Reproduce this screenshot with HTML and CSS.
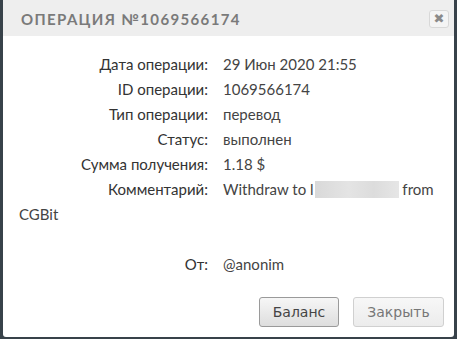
FILE: index.html
```html
<!DOCTYPE html>
<html lang="ru">

<head>
    <meta charset="utf-8">
    <title>Операция</title>
    <link rel="stylesheet" href="styles.css">
</head>

<body>
    <div class="modal">
        <div class="modal-head">
            <span class="modal-title">Операция №1069566174</span>
            <span class="close">&#x2716;</span>
        </div>

        <div class="modal-body">
            <div class="row"><span class="label">Дата операции:</span>29 Июн 2020 21:55</div>
            <div class="row"><span class="label">ID операции:</span>1069566174</div>
            <div class="row"><span class="label">Тип операции:</span>перевод</div>
            <div class="row"><span class="label">Статус:</span>выполнен</div>
            <div class="row"><span class="label">Сумма получения:</span>1.18 $</div>
            <div class="row"><span class="label">Комментарий:</span>Withdraw to l<span class="hidden"></span> from</div>
            <div class="row">CGBit</div>
            <div class="row from"><span class="label">От:</span>@anonim</div>
        </div>

        <div class="modal-foot">
            <button class="btn">Баланс</button>
            <button class="btn btn-light">Закрыть</button>
        </div>
    </div>
</body>

</html>
```

FILE: styles.css
```css
html, body {
    height: 100%;
}

body {
    margin: 0;
    padding: 0 3px 2px 3px;
    box-sizing: border-box;
    background-color: #38424a;
    display: flex;
    font-family: Lato, "Open Sans", sans-serif;
}

.modal {
    flex: 1;
    display: flex;
    flex-direction: column;
    background-color: #fff;
    border-radius: 0 0 3px 3px;
}

.modal-head {
    height: 36px;
    background-color: #eee;
    display: flex;
    align-items: center;
    justify-content: space-between;
    padding: 0 5px 0 18px;
}

.modal-title {
    text-transform: uppercase;
    font-weight: 700;
    font-size: 15px;
    letter-spacing: 1.35px;
    color: #7a7a7a;
    margin-top: 2px;
}

.close {
    width: 18px;
    height: 16px;
    border: 1px solid #d8d8d8;
    border-radius: 3px;
    background-color: #f4f4f4;
    color: #8a8a8a;
    font-family: "DejaVu Sans", sans-serif;
    font-size: 13px;
    font-weight: 700;
    line-height: 16px;
    text-align: center;
    margin-top: 2px;
}

.modal-body {
    flex: 1;
    padding: 16px 16px 0 16px;
    font-size: 15px;
    line-height: 25px;
    color: #444;
}

.label {
    display: inline-block;
    width: 189px;
    text-align: right;
    margin-right: 15px;
    color: #333;
}

.hidden {
    display: inline-block;
    width: 84px;
    height: 17px;
    margin-left: 1px;
    vertical-align: -3px;
    background: linear-gradient(90deg, #d9d9d9, #e4e4e4 40%, #dcdcdc 70%, #e6e6e6);
}

.from {
    margin-top: 25px;
}

.modal-foot {
    display: flex;
    justify-content: flex-end;
    gap: 14px;
    padding: 0 10px 10px 0;
}

.btn {
    width: 80px;
    height: 30px;
    padding: 0;
    font-family: "DejaVu Sans", sans-serif;
    font-size: 14px;
    font-weight: 400;
    color: #444;
    border: 1px solid #9a9a9a;
    border-radius: 3px;
    background: linear-gradient(#f6f6f6, #dedede);
}

.btn-light {
    width: 91px;
    color: #777;
    border-color: #d0d0d0;
    background: linear-gradient(#f7f7f7, #ececec);
}
```
